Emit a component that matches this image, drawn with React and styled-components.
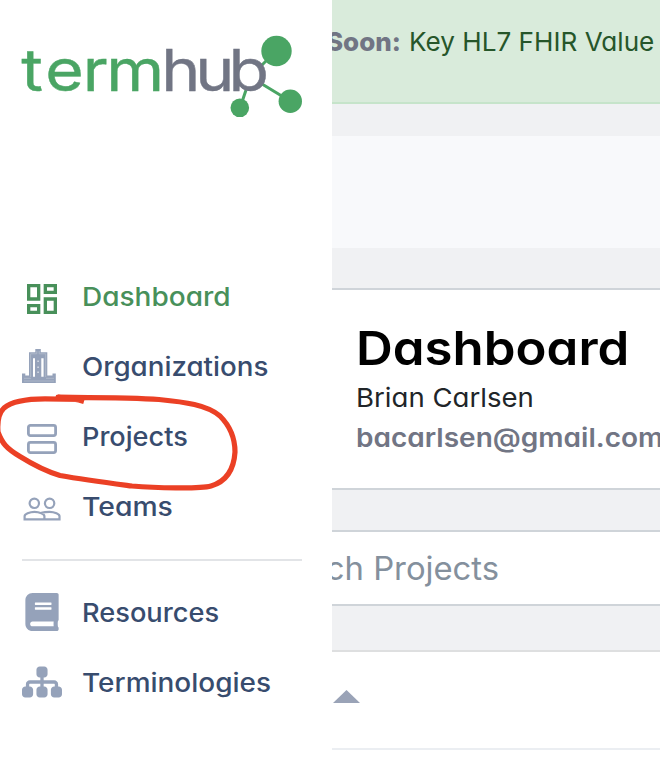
import React from "react";
import styled, { createGlobalStyle } from "styled-components";
import { MdOutlineDashboard } from "react-icons/md";
import { FaBook } from "react-icons/fa";
import { FaSitemap } from "react-icons/fa6";

const GlobalStyle = createGlobalStyle`
  *, *::before, *::after { box-sizing: border-box; }
  body {
    margin: 0;
    background: #fff;
    overflow: hidden;
    font-family: Inter, "Open Sans", sans-serif;
    font-feature-settings: "cv11";
  }
`;

const Page = styled.div`
  position: relative;
  display: flex;
  width: 660px;
  height: 780px;
  overflow: hidden;
  background: #fff;
`;

const Sidebar = styled.aside`
  flex: 0 0 332px;
  padding: 0 30px 0 22px;
  display: flex;
  flex-direction: column;
`;

const Brand = styled.a`
  display: block;
  height: 262px;
  padding-top: 30px;
  svg { display: block; overflow: visible; }
`;

const LogoText = styled.text`
  font-family: Inter, sans-serif;
  font-size: 58px;
  font-weight: 400;
  fill: ${(p) => p.$tone};
  stroke: ${(p) => p.$tone};
  stroke-width: 0.4px;
`;

const NavItem = styled.a`
  display: flex;
  align-items: center;
  height: 70px;
  color: ${(p) => (p.$active ? "#48905a" : "#384c6e")};
`;

const NavIcon = styled.span`
  display: flex;
  justify-content: center;
  width: 40px;
  margin-right: 20px;
  margin-top: ${(p) => p.$drop || 0}px;
  color: ${(p) => (p.$active ? "#48905a" : "#95a2ba")};
  svg { display: block; flex: none; overflow: visible; }
`;

const Wide = styled.span`
  display: inline-block;
  transform: scaleX(${(p) => p.$stretch || 1});
  transform-origin: ${(p) => p.$origin || "left"} center;
`;

const Label = styled(Wide)`
  margin-left: -0.5px;
  font-size: 26px;
  font-weight: 500;
  line-height: 36px;
  white-space: nowrap;
`;

const Divider = styled.hr`
  width: 280px;
  height: 2px;
  margin: 17px 0;
  border: 0;
  background: #e2e4e7;
`;

const Main = styled.main`
  flex: 1;
  min-width: 0;
  overflow: hidden;
  background: #f0f1f3;
`;

const Banner = styled.div`
  display: flex;
  height: 104px;
  padding-top: 24px;
  gap: 8px;
  background: #d9ebdb;
  border-bottom: 2px solid #c6e4ca;
  font-size: 26px;
  line-height: 36px;
  white-space: nowrap;
  color: #26562a;
`;

const BannerLead = styled.strong`
  display: flex;
  justify-content: flex-end;
  flex: 0 0 69px;
  overflow: hidden;
  font-weight: 800;
  color: #717584;
`;

const Toolbar = styled.div`
  height: 112px;
  margin: 32px 0 40px;
  background: #f8f9fb;
`;

const Profile = styled.section`
  height: 202px;
  padding: 28px 0 0 24px;
  background: #fff;
  border: solid #cfd4d9;
  border-width: 2px 0;
  white-space: nowrap;
`;

const Title = styled.h1`
  margin: 0;
  font-size: 47px;
  font-weight: 600;
  line-height: 60px;
  color: #000;
`;

const UserName = styled.div`
  font-size: 26px;
  line-height: 40px;
  color: #212529;
`;

const Email = styled.div`
  font-size: 26px;
  font-weight: 600;
  line-height: 40px;
  color: #717584;
`;

const SearchBox = styled.div`
  display: flex;
  justify-content: flex-end;
  align-items: center;
  height: 76px;
  margin: 40px 0 44px;
  padding-right: 161px;
  overflow: hidden;
  background: #fff;
  border: solid #cfd4d9;
  border-width: 2px 0;
  font-size: 32px;
  white-space: nowrap;
  color: #84909d;
`;

const Table = styled.div`
  height: 130px;
  background: #fff;
  border-top: 2px solid #dedfe0;
`;

const TableHead = styled.div`
  height: 98px;
  padding: 38px 0 0 1px;
  border-bottom: 2px solid #ebeef2;
  svg { display: block; }
`;

const Annotation = styled.svg`
  position: absolute;
  left: 0;
  top: 380px;
  pointer-events: none;
`;

const Logo = () => (
  <svg width="280" height="90" viewBox="22 30 280 90">
    <g stroke="#4aa564" strokeWidth="3">
      <path d="M276 51 260 67M290 101 262 84M240 108 246 90" />
    </g>
    <g fill="#4aa564">
      <circle cx="276.5" cy="51" r="15.2" />
      <circle cx="290.3" cy="101.2" r="11.7" />
      <circle cx="239.8" cy="107.8" r="9.3" />
    </g>
    <g transform="scale(1.14 1)">
      <LogoText $tone="#4aa564" x="18.6 39.8 72.6 93.2" y="91.5">term</LogoText>
      <LogoText $tone="#717584" x="141.5 171.2 200.4" y="91.5">hub</LogoText>
    </g>
  </svg>
);

const BuildingIcon = () => (
  <svg width="40" height="34" viewBox="0 0 40 34" fill="none">
    <path
      d="M13.3 0H18.8V3.2H25.3V26.4H30.5V24.4H33.8V34H0V24.4H3.3V26.4H7V3.2H13.3Z"
      fill="#95a2ba"
    />
    <path d="M8.6 28V4.8H14.8V2M23.7 28V4.8H17.2V2M2 29.300H9M24 29.300H32M2 32H32" stroke="#b0bacb" strokeWidth="0.9" />
    <path d="M11 9.300H13V27.700H11ZM19.300 9.300H21.600V27.700H19.300Z" fill="#fff" />
    <path d="M15.200 11.500H17V13H15.200ZM15.200 17.500H17V19H15.200ZM15.200 22.500H17V24H15.200Z" fill="#cbd2de" />
  </svg>
);

const ProjectsIcon = () => (
  <svg width="30" height="30" viewBox="0 0 30 30" fill="none" stroke="currentColor" strokeWidth="2.8">
    <rect x="1.4" y="1.4" width="27.2" height="10.2" rx="2" />
    <rect x="1.4" y="18.4" width="27.2" height="10.2" rx="2" />
  </svg>
);

const TeamsIcon = () => (
  <svg width="38" height="24" viewBox="0 0 38 24" fill="none" stroke="currentColor" strokeWidth="2.2">
    <circle cx="11.3" cy="6.3" r="4.7" />
    <circle cx="26.6" cy="6.3" r="4.7" />
    <path d="M1.6 22.4v-3.2c0-1.7 4.8-4.4 9.9-4.4s9.9 2.7 9.9 4.4v3.2zM18.4 15.9c2.1-.7 5-1.1 8.1-1.1 5.3 0 10 2.7 10 4.4v3.2H21.4" />
  </svg>
);

const mainLinks = [
  { label: "Dashboard", icon: <MdOutlineDashboard size={40} />, drop: 4, active: true, stretch: 1.077 },
  { label: "Organizations", icon: <BuildingIcon />, drop: -2, stretch: 1.066 },
  { label: "Projects", icon: <ProjectsIcon />, drop: 4, stretch: 1.043 },
  { label: "Teams", icon: <TeamsIcon />, drop: 4, stretch: 1.09 },
];

const moreLinks = [
  { label: "Resources", icon: <FaBook size={38} />, drop: -2, stretch: 1.047 },
  { label: "Terminologies", icon: <FaSitemap size={40} />, drop: -2, stretch: 1.075 },
];

const NavLink = ({ label, icon, drop, active, stretch }) => (
  <NavItem $active={active}>
    <NavIcon $active={active} $drop={drop}>{icon}</NavIcon>
    <Label $stretch={stretch}>{label}</Label>
  </NavItem>
);

export default function App() {
  return (
    <Page>
      <GlobalStyle />
      <Sidebar>
        <Brand><Logo /></Brand>
        {mainLinks.map((l) => <NavLink key={l.label} {...l} />)}
        <Divider />
        {moreLinks.map((l) => <NavLink key={l.label} {...l} />)}
      </Sidebar>
      <Main>
        <Banner>
          <BannerLead><Wide $origin="right">Soon:</Wide></BannerLead>
          <Wide $stretch={1.005}>Key HL7 FHIR Value</Wide>
        </Banner>
        <Toolbar />
        <Profile>
          <Title><Wide $stretch={1.084}>Dashboard</Wide></Title>
          <UserName><Wide $stretch={1.06}>Brian Carlsen</Wide></UserName>
          <Email><Wide $stretch={1.078}>bacarlsen@gmail.com</Wide></Email>
        </Profile>
        <SearchBox><Wide $stretch={1.025} $origin="right">ch Projects</Wide></SearchBox>
        <Table>
          <TableHead>
            <svg width="27" height="13" viewBox="0 0 27 13">
              <path d="M0 13 13.5 0 27 13z" fill="#9aa3b7" />
            </svg>
          </TableHead>
        </Table>
      </Main>
      <Annotation width="245" height="120" viewBox="0 380 245 120" fill="none" stroke="#eb4025" strokeWidth="5.2" strokeLinejoin="round">
        <path d="M84 401.500C76 399 68 398 58 397.200C95 397.500 135 397.500 159 399.500C185 402 207 405 220 416C231 427 235 438 235 452C234 468 228 481 211 486C200 489 155 488 132 486C105 482.500 85 480 60 475.500C45 471 32 464 20 456.500C6 448 2 443 -2 432C-3 420 -1 413 4 408C12 401 25 398.800 45 398.800L83 399.500" />
      </Annotation>
    </Page>
  );
}
